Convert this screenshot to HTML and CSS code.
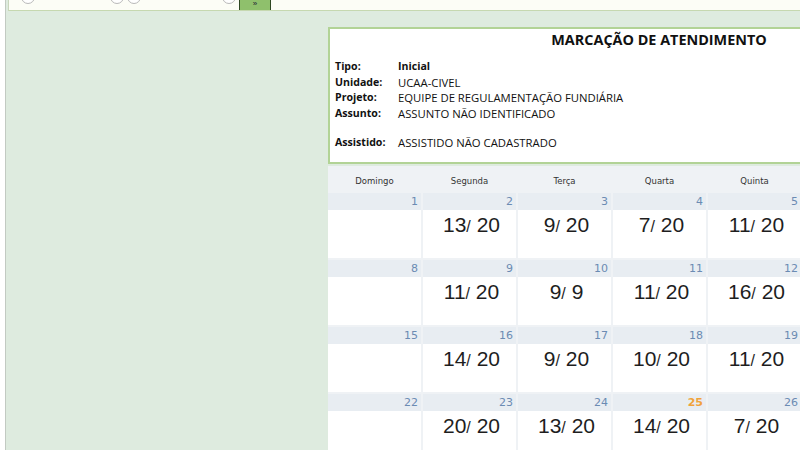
FILE: index.html
```html
<!DOCTYPE html>
<html>
<head>
	<meta charset="UTF-8">
	<title>Marcação de Atendimento</title>
	<link rel="stylesheet" href="styles.css">
</head>
<body>
	<div class="frame">
		<div class="topbar">
			<span class="radio r1"></span>
			<span class="radio r2"></span>
			<span class="radio r3"></span>
			<span class="radio r4"></span>
			<button class="go">»</button>
		</div>

		<div class="main">
			<div class="side"></div>

			<div class="schedule">
				<div class="info">
					<h2>MARCAÇÃO DE ATENDIMENTO</h2>
					<table>
						<tr><th>Tipo:</th><td class="strong">Inicial</td></tr>
						<tr><th>Unidade:</th><td>UCAA-CIVEL</td></tr>
						<tr><th>Projeto:</th><td>EQUIPE DE REGULAMENTAÇÃO FUNDIÁRIA</td></tr>
						<tr><th>Assunto:</th><td>ASSUNTO NÃO IDENTIFICADO</td></tr>
						<tr class="sep"><th>Assistido:</th><td>ASSISTIDO NÃO CADASTRADO</td></tr>
					</table>
				</div>

				<div class="calendar">
					<div class="dayname">Domingo</div>
					<div class="dayname">Segunda</div>
					<div class="dayname">Terça</div>
					<div class="dayname">Quarta</div>
					<div class="dayname">Quinta</div>
					<div class="dayname">Sexta</div>
					<div class="dayname">Sábado</div>

					<div class="day"><div class="num">1</div><div class="slots"></div></div>
					<div class="day"><div class="num">2</div><div class="slots">13<span class="sl">/</span> 20</div></div>
					<div class="day"><div class="num">3</div><div class="slots">9<span class="sl">/</span> 20</div></div>
					<div class="day"><div class="num">4</div><div class="slots">7<span class="sl">/</span> 20</div></div>
					<div class="day"><div class="num">5</div><div class="slots">11<span class="sl">/</span> 20</div></div>
					<div class="day"><div class="num">6</div><div class="slots">8<span class="sl">/</span> 20</div></div>
					<div class="day"><div class="num">7</div><div class="slots"></div></div>

					<div class="day"><div class="num">8</div><div class="slots"></div></div>
					<div class="day"><div class="num">9</div><div class="slots">11<span class="sl">/</span> 20</div></div>
					<div class="day"><div class="num">10</div><div class="slots">9<span class="sl">/</span> 9</div></div>
					<div class="day"><div class="num">11</div><div class="slots">11<span class="sl">/</span> 20</div></div>
					<div class="day"><div class="num">12</div><div class="slots">16<span class="sl">/</span> 20</div></div>
					<div class="day"><div class="num">13</div><div class="slots">10<span class="sl">/</span> 20</div></div>
					<div class="day"><div class="num">14</div><div class="slots"></div></div>

					<div class="day"><div class="num">15</div><div class="slots"></div></div>
					<div class="day"><div class="num">16</div><div class="slots">14<span class="sl">/</span> 20</div></div>
					<div class="day"><div class="num">17</div><div class="slots">9<span class="sl">/</span> 20</div></div>
					<div class="day"><div class="num">18</div><div class="slots">10<span class="sl">/</span> 20</div></div>
					<div class="day"><div class="num">19</div><div class="slots">11<span class="sl">/</span> 20</div></div>
					<div class="day"><div class="num">20</div><div class="slots">12<span class="sl">/</span> 20</div></div>
					<div class="day"><div class="num">21</div><div class="slots"></div></div>

					<div class="day"><div class="num">22</div><div class="slots"></div></div>
					<div class="day"><div class="num">23</div><div class="slots">20<span class="sl">/</span> 20</div></div>
					<div class="day"><div class="num">24</div><div class="slots">13<span class="sl">/</span> 20</div></div>
					<div class="day today"><div class="num">25</div><div class="slots">14<span class="sl">/</span> 20</div></div>
					<div class="day"><div class="num">26</div><div class="slots">7<span class="sl">/</span> 20</div></div>
					<div class="day"><div class="num">27</div><div class="slots">5<span class="sl">/</span> 20</div></div>
					<div class="day"><div class="num">28</div><div class="slots"></div></div>
				</div>
			</div>
		</div>
	</div>
</body>
</html>
```

FILE: styles.css
```css
html, body { margin: 0; height: 100%; overflow: hidden; background: #fff; }
body { font-family: "Open Sans", "Liberation Sans", sans-serif; color: #111; }

.frame { margin-left: 5px; height: 450px; border-left: 1px solid #c2cac2; background: #deebdf; overflow: hidden; }

.topbar { display: flex; align-items: flex-end; height: 10px; margin-left: 2px; border-left: 1px solid #c9d6bd; border-bottom: 1px solid #c6d8b0; background: #fcfdf6; overflow: hidden; }
.radio { flex: none; width: 12px; height: 12px; margin-bottom: 6px; border: 1px solid #b9b9b9; border-radius: 50%; background: #fff; }
.r1 { margin-left: 12px; }
.r2 { margin-left: 75px; }
.r3 { margin-left: 3px; }
.r4 { margin-left: 81px; }
.go { flex: none; width: 32px; height: 14px; margin: 0 0 -1px 3px; padding: 0; border: 1px solid #2e4722; background: #8fc06c; color: #223; font-size: 8px; line-height: 8px; }

.main { display: flex; }
.side { flex: none; width: 320px; }
.schedule { flex: none; width: 700px; padding-top: 16px; }

.info { width: 658px; margin-left: 2px; padding: 1px 0 11px; border: 2px solid #b2d396; background: #fff; }
.info h2 { margin: 0 0 10px; font-size: 14.4px; line-height: 19px; text-align: center; font-weight: bold; color: #111; }
.info table { border-collapse: collapse; margin-left: 5px; font-size: 11.3px; }
.info th { width: 63px; padding: 0; text-align: left; font-weight: bold; font-size: 10.6px; line-height: 15.7px; }
.info td { padding: 0; line-height: 15.7px; }
.info td.strong { font-weight: bold; font-size: 10.6px; }
.info .sep th, .info .sep td { padding-top: 13px; }

.calendar { display: grid; grid-template-columns: repeat(7, 93px); grid-auto-rows: auto; gap: 2px; margin: 2px 0 0 2px; background: #eff2f5; }
.dayname { height: 25px; padding-top: 8px; box-sizing: border-box; font-family: "DejaVu Sans", sans-serif; font-size: 8.5px; line-height: 14px; text-align: center; color: #333; }
.day { background: #fff; }
.num { height: 17px; padding-right: 3px; background: #e8edf2; font-family: "DejaVu Sans", sans-serif; font-size: 11px; line-height: 17px; text-align: right; color: #6b8bb3; }
.today .num { color: #f0a23a; font-weight: bold; }
.slots { height: 48px; padding-left: 4px; font-family: "Liberation Sans", Arial, sans-serif; font-size: 21px; line-height: 30px; text-align: center; color: #1e1e1e; }
.sl { font-size: 16px; }
```
